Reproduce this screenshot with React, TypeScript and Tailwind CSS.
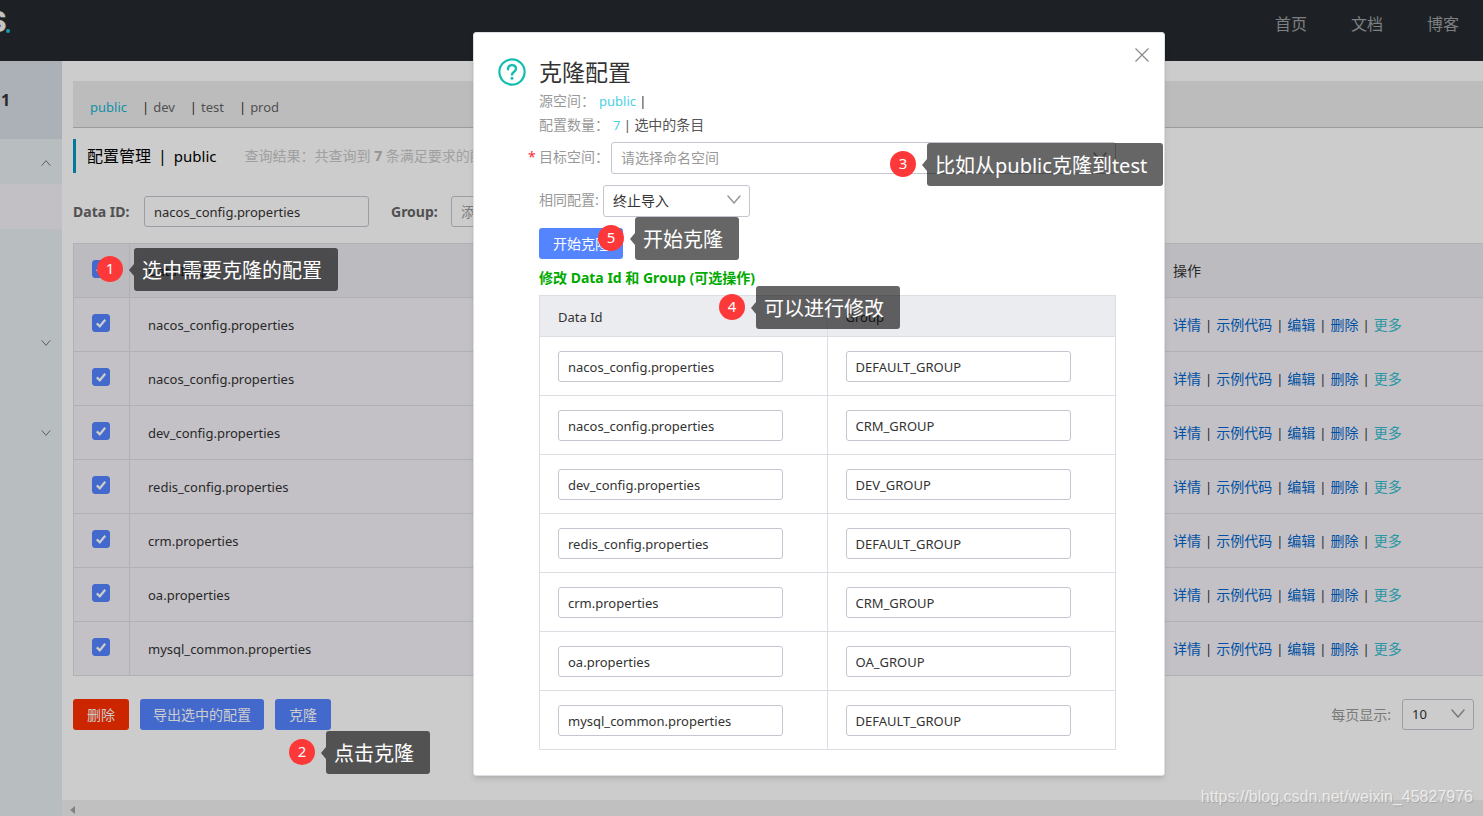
import { useState } from "react";

const ROWS = [
  { dataId: "nacos_config.properties", group: "DEFAULT_GROUP" },
  { dataId: "nacos_config.properties", group: "CRM_GROUP" },
  { dataId: "dev_config.properties", group: "DEV_GROUP" },
  { dataId: "redis_config.properties", group: "DEFAULT_GROUP" },
  { dataId: "crm.properties", group: "CRM_GROUP" },
  { dataId: "oa.properties", group: "OA_GROUP" },
  { dataId: "mysql_common.properties", group: "DEFAULT_GROUP" },
];

const NAMESPACES = ["public", "dev", "test", "prod"];
const ACTIONS = ["详情", "示例代码", "编辑", "删除", "更多"];

// "" = plain entry, otherwise which way the arrow points
const MENU = ["up", "active", "", "", "down", "", "down"];

function Chevron({ className, up }: { className: string; up?: boolean }) {
  return (
    <svg viewBox="0 0 14 9" className={className} fill="none" stroke="currentColor" strokeWidth="1.5" strokeLinecap="round">
      <path d={up ? "M1 8 7 1l6 7" : "M1 1l6 7 6-7"} />
    </svg>
  );
}

function Callout({ n, text, className }: { n: number; text: string; className: string }) {
  return (
    <div className={`absolute z-10 flex items-center whitespace-nowrap text-white ${className}`}>
      <span className="mb-px flex h-[26px] w-[26px] items-center justify-center rounded-full bg-[#fd3838] pb-0.5 text-[15px] leading-none">
        {n}
      </span>
      <svg viewBox="0 0 5 12" className="ml-1.5 h-3 w-[5px] fill-black/60">
        <path d="M5 0v12L0 6z" />
      </svg>
      <span className="rounded-[3px] bg-black/60 pb-[5px] pl-2 pr-4 pt-[7px] text-xl leading-[31px]">{text}</span>
    </div>
  );
}

function Tick({ label }: { label: string }) {
  const [on, setOn] = useState(true);
  return (
    <span className="relative block h-[18px] w-[18px]">
      <input
        type="checkbox"
        aria-label={label}
        checked={on}
        onChange={e => setOn(e.target.checked)}
        className="block h-[18px] w-[18px] appearance-none rounded-[3px] border border-[#c4c6cf] bg-white checked:border-[#5584ff] checked:bg-[#5584ff]"
      />
      {on && (
        <svg viewBox="0 0 18 18" className="pointer-events-none absolute inset-0" fill="none" stroke="#fff" strokeWidth="2.2">
          <path d="m4.800 9.400 3 2.900 5.400-6.500" />
        </svg>
      )}
    </span>
  );
}

function Header() {
  return (
    <header className="flex h-[61px] shrink-0 items-start justify-between bg-[#252a2f] pr-6">
      <div className="-ml-3 mt-1 flex font-['Inter',sans-serif] text-[28px] font-extrabold leading-9 text-[#f5f5f5]">
        S<span className="mt-[25px] h-1 w-1 rounded-full bg-[#1bc1d6]" />
      </div>
      <nav className="flex gap-11 pt-3 text-base leading-6 text-[#9d9fa1]">
        <a href="#home">首页</a>
        <a href="#docs">文档</a>
        <a href="#blog">博客</a>
      </nav>
    </header>
  );
}

function Sidebar() {
  return (
    <aside className="w-[62px] shrink-0 bg-[#e7edf0]">
      <div className="h-[78px] bg-[#d8dde5] pl-px text-base font-bold leading-[78px] text-[#333]">1</div>
      <ul>
        {MENU.map((m, i) => (
          <li
            key={i}
            className={`flex h-[45px] items-center justify-end pr-[11px] pt-0.5 text-[#777] ${m === "active" ? "bg-[#f3f0f7]" : ""}`}
          >
            {(m === "up" || m === "down") && <Chevron up={m === "up"} className="h-1.5 w-2.5" />}
          </li>
        ))}
      </ul>
    </aside>
  );
}

function ConfigTable() {
  return (
    <table className="mt-4 w-full table-fixed border-separate border-spacing-0 border-l border-t border-[#dcdde3] bg-[#f4f2f8] text-left text-[#333]">
      <thead className="bg-[#ebecf1]">
        <tr className="h-[54px]">
          <th className="w-14 border-b border-r border-[#dcdde3] pb-1 pl-[18px]"><Tick label="全选" /></th>
          <th className="border-b border-[#dcdde3] pl-[18px] pt-0.5 text-[13px] font-normal">Data Id ↓</th>
          <th className="w-[310px] border-b border-[#dcdde3] text-sm font-normal">操作</th>
        </tr>
      </thead>
      <tbody>
        {ROWS.map((r, i) => (
          <tr key={i} className="h-[54px]">
            <td className="border-b border-r border-[#dcdde3] pb-1 pl-[18px]"><Tick label={r.dataId} /></td>
            <td className="border-b border-[#dcdde3] pl-[18px] pt-0.5 text-[13px]">{r.dataId}</td>
            <td className="border-b border-[#dcdde3] text-sm">
              {ACTIONS.map((a, j) => (
                <span key={a}>
                  {j > 0 && <span className="mx-1 text-[13px]">|</span>}
                  <a href="#op" className={a === "更多" ? "text-[#33bccd]" : "text-[#06c]"}>{a}</a>
                </span>
              ))}
            </td>
          </tr>
        ))}
      </tbody>
    </table>
  );
}

function ConfigPage() {
  return (
    <main className="flex min-w-0 flex-1 flex-col bg-white">
      <div className="pl-[11px] pt-5">
        <nav className="flex h-[47px] items-center gap-[15px] border-b border-[#c2c2c2] bg-[#ececec] pl-[17px] pt-[7px] text-[13px] text-[#666]">
          {NAMESPACES.map((n, i) => (
            <span key={n}>
              {i > 0 && <span className="mr-1 text-[#333]">|</span>}
              <a href="#ns" className={i === 0 ? "text-[#17b5d0]" : ""}>{n}</a>
            </span>
          ))}
        </nav>

        <div className="mt-[11px] flex h-[34px] items-center overflow-hidden whitespace-nowrap border-l-[3px] border-[#0098c4] pl-[11px] text-base text-black">
          <h1>配置管理</h1>
          <span className="mx-[7px]">|</span>
          <span className="text-[15px]">public</span>
          <span className="ml-7 text-sm text-[#c8c8c8]">
            查询结果：共查询到 <b className="text-[#b8b8b8]">7</b> 条满足要求的配置。
          </span>
        </div>

        <form className="mt-[23px] flex items-center text-[13px]" onSubmit={e => e.preventDefault()}>
          <label htmlFor="dataId" className="w-[71px] text-sm font-bold text-[#666]">Data ID:</label>
          <input
            id="dataId"
            defaultValue="nacos_config.properties"
            className="h-[31px] w-[225px] rounded-[3px] border border-[#c4c6cf] px-[9px] text-[#333]"
          />
          <label htmlFor="group" className="ml-[22px] w-[60px] text-sm font-bold text-[#666]">Group:</label>
          <input
            id="group"
            placeholder="添加通配符'*'进行模糊查询"
            className="h-[31px] w-[225px] rounded-[3px] border border-[#c4c6cf] px-[9px] text-sm placeholder:text-[#999]"
          />
        </form>

        <ConfigTable />

        <div className="mt-[23px] flex items-center gap-[11px] pr-[9px] text-sm text-white">
          <button className="h-[31px] rounded-[3px] bg-[#ff3000] px-3.5">删除</button>
          <button className="h-[31px] rounded-[3px] bg-[#5584ff] px-[13px]">导出选中的配置</button>
          <button className="h-[31px] rounded-[3px] bg-[#5584ff] px-3.5">克隆</button>
          <label htmlFor="pageSize" className="ml-auto text-[#999]">每页显示:</label>
          <span className="relative text-[#333]">
            <select
              id="pageSize"
              className="block h-[31px] w-[72px] appearance-none rounded-[3px] border border-[#c4c6cf] bg-white px-[9px] text-[13px]"
            >
              <option>10</option>
              <option>20</option>
            </select>
            <Chevron className="pointer-events-none absolute right-[9px] top-2.5 w-3.5 text-[#999]" />
          </span>
        </div>
      </div>

      {/* horizontal scrollbar */}
      <div className="mt-auto flex h-4 items-center bg-[#f1f1f1] pl-2 pt-1">
        <svg viewBox="0 0 5 8" className="h-2 w-[5px] fill-[#a3a3a3]"><path d="M5 0v8L0 4z" /></svg>
      </div>
    </main>
  );
}

function CloneDialog() {
  return (
    <div
      role="dialog"
      aria-labelledby="cloneTitle"
      className="relative mt-8 w-[692px] rounded-[3px] border border-[#dcdee3] bg-white pb-[25px] pl-[65px] pr-12 pt-6 text-sm text-[#333] shadow-md"
    >
      <button aria-label="关闭" className="absolute right-[15px] top-[15px] text-[#888]">
        <svg viewBox="0 0 14 14" className="h-3.5 w-3.5" fill="none" stroke="currentColor" strokeWidth="1.2">
          <path d="m.5.5 13 13M13.500.5l-13 13" />
        </svg>
      </button>
      <svg viewBox="0 0 28 28" className="absolute left-6 top-[25px] h-7 w-7" fill="none" stroke="#13beb0">
        <circle cx="14" cy="14" r="12.6" strokeWidth="2.2" />
        <path d="M10 11.200c0-2.500 1.700-4.100 4-4.100s4 1.500 4 3.700c0 3-4 3.200-4 5.700" strokeWidth="2.400" strokeLinecap="round" />
        <circle cx="14" cy="20.200" r="1.500" fill="#13beb0" stroke="none" />
      </svg>

      <h2 id="cloneTitle" className="mb-0.5 text-[23px] leading-[30px]">克隆配置</h2>
      <p className="leading-6">
        <span className="text-[#999]">源空间：</span>
        <span className="ml-1 text-[13px]"><span className="text-[#4ccfe6]">public</span> |</span>
      </p>
      <p className="leading-6 text-[#555]">
        <span className="text-[#999]">配置数量：</span>
        <span className="ml-1 text-[13px]"><span className="text-[#4ccfe6]">7</span> | </span>选中的条目
      </p>

      <div className="mt-[5px] flex items-center">
        <label htmlFor="target" className="relative w-[72px] pb-0.5 text-[#999]">
          <span className="absolute -left-[11px] text-red-500">*</span>目标空间：
        </label>
        <span className="relative flex-1">
          <select
            id="target"
            className="block h-8 w-full appearance-none rounded-[3px] border border-[#c4c6cf] bg-white px-[9px] text-[#999]"
          >
            <option>请选择命名空间</option>
          </select>
          <Chevron className="pointer-events-none absolute right-[9px] top-2.5 w-3.5 text-[#999]" />
        </span>
      </div>
      <div className="mt-[11px] flex items-center">
        <label htmlFor="policy" className="w-16 pb-0.5 text-[#999]">相同配置:</label>
        <span className="relative">
          <select
            id="policy"
            className="block h-8 w-[147px] appearance-none rounded-[3px] border border-[#c4c6cf] bg-white px-[9px] text-[#333]"
          >
            <option>终止导入</option>
            <option>跳过</option>
            <option>覆盖</option>
          </select>
          <Chevron className="pointer-events-none absolute right-[9px] top-2.5 w-3.5 text-[#999]" />
        </span>
      </div>
      <button className="mt-[11px] block h-[31px] rounded-[3px] bg-[#5584ff] px-3.5 text-white">开始克隆</button>

      <table className="w-full table-fixed border-separate border-spacing-0 text-left text-[13px]">
        <caption className="pb-1.5 pt-2 text-left font-bold leading-[22px] text-[#0a0]">
          <span className="text-sm">修改 Data Id 和 Group (可选操作)</span>
        </caption>
        <thead className="bg-[#ebecf0]">
          <tr className="h-[42px]">
            <th className="border border-[#dcdee3] px-[18px] pt-0.5 font-normal">Data Id</th>
            <th className="border-y border-r border-[#dcdee3] px-[18px] pt-0.5 font-normal">Group</th>
          </tr>
        </thead>
        <tbody>
          {ROWS.map((r, i) => (
            <tr key={i} className="h-[59px]">
              <td className="border-x border-b border-[#dcdee3] px-[18px]">
                <input
                  aria-label="Data Id"
                  defaultValue={r.dataId}
                  className="block h-[31px] w-[225px] rounded-[3px] border border-[#c4c6cf] px-[9px] pt-0.5"
                />
              </td>
              <td className="border-b border-r border-[#dcdee3] px-[18px]">
                <input
                  aria-label="Group"
                  defaultValue={r.group}
                  className="block h-[31px] w-[225px] rounded-[3px] border border-[#c4c6cf] px-[9px] pt-0.5"
                />
              </td>
            </tr>
          ))}
        </tbody>
      </table>

      <Callout n={3} text="比如从public克隆到test" className="left-[416px] top-[110px]" />
      <Callout n={5} text="开始克隆" className="left-[124px] top-[184px]" />
      <Callout n={4} text="可以进行修改" className="left-[245px] top-[253px]" />
    </div>
  );
}

export default function App() {
  return (
    <div className="relative flex min-h-screen flex-col overflow-hidden font-['Noto_Sans','Noto_Sans_CJK_SC',sans-serif]">
      <Header />
      <div className="flex flex-1">
        <Sidebar />
        <ConfigPage />
      </div>

      {/* mask + dialog */}
      <div className="absolute inset-0 flex items-start justify-center bg-black/20 pl-[155px]">
        <CloneDialog />
      </div>

      <Callout n={1} text="选中需要克隆的配置" className="left-[97px] top-[248px]" />
      <Callout n={2} text="点击克隆" className="left-[289px] top-[731px]" />

      <p className="absolute bottom-[7px] right-2.5 font-['Liberation_Sans',sans-serif] text-base text-white/70 [text-shadow:1px_1px_1px_rgba(0,0,0,0.15)]">
        https://blog.csdn.net/weixin_45827976
      </p>
    </div>
  );
}
